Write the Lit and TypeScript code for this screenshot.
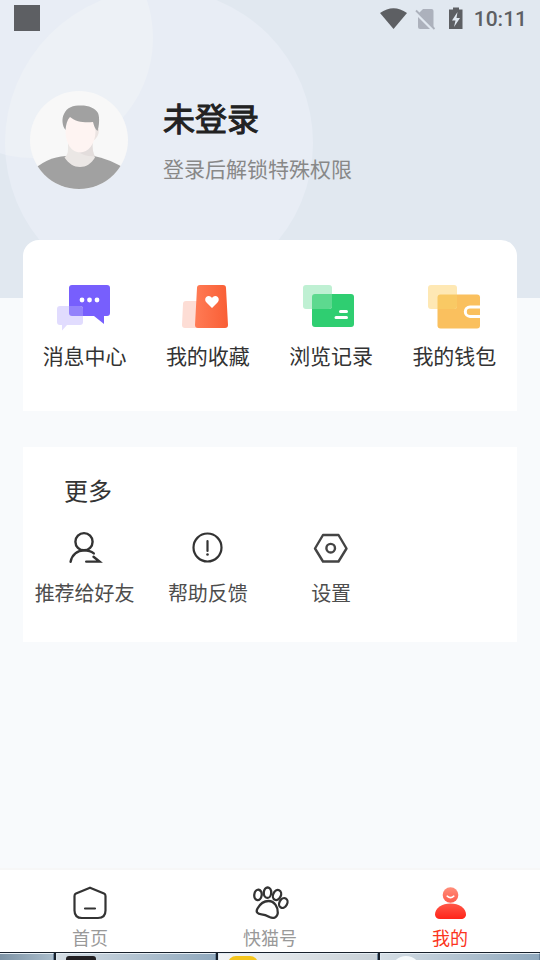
import { LitElement, html, css, svg } from "lit";
import { customElement } from "lit/decorators.js";
import { classMap } from "lit/directives/class-map.js";

const messageIcon = svg`
  <g transform="translate(-1 0)">
    <path d="M30 15H65a3 3 0 0 1 3 3v25a3 3 0 0 1-3 3H62V54L52 46H30a3 3 0 0 1-3-3V18a3 3 0 0 1 3-3Z" fill="#775ffd"/>
    <path d="M18 36H38a3 3 0 0 1 3 3v13a3 3 0 0 1-3 3H25L20 60.500V55H18a3 3 0 0 1-3-3V39a3 3 0 0 1 3-3Z" fill="#e1dcfe"/>
    <path d="M27 36H38a3 3 0 0 1 3 3v7H30a3 3 0 0 1-3-3Z" fill="#9382fb"/>
    <g fill="#fff"><circle cx="40" cy="30" r="2.400"/><circle cx="47.500" cy="30" r="2.400"/><circle cx="55" cy="30" r="2.400"/></g>
  </g>`;

const favouriteIcon = svg`
  <defs><linearGradient id="fav"><stop stop-color="#ff7b55"/><stop offset="1" stop-color="#f95e35"/></linearGradient></defs>
  <path d="M20 31H36V58H19a3 3 0 0 1-3-3L17 34a3 3 0 0 1 3-3Z" fill="#fdddd5"/>
  <path d="M34 15H57a3 3 0 0 1 3 3L62 55a3 3 0 0 1-3 3H32a3 3 0 0 1-3-3L31 18a3 3 0 0 1 3-3Z" fill="url(#fav)"/>
  <path d="M46 38 40.500 32.500C38 30 39.500 26 42.500 26c2 0 3 1 3.500 2.200.5-1.200 1.500-2.200 3.500-2.200 3 0 4.500 4 2 6.500Z" fill="#fff"/>`;

const historyIcon = svg`
  <g transform="translate(-1 0)">
    <rect x="24" y="24" width="42" height="33" rx="3" fill="#2fce71"/>
    <rect x="15" y="15" width="29" height="24" rx="3" fill="#bff0d3"/>
    <path d="M24 27a3 3 0 0 1 3-3H44V36a3 3 0 0 1-3 3H24Z" fill="#5dd98f"/>
    <path d="M52.500 41.400H58.500M48 47.400H58.500" stroke="#fff" stroke-width="3" stroke-linecap="round"/>
  </g>`;

const walletIcon = svg`
  <g transform="translate(1 0)">
    <rect x="24.500" y="24.500" width="42.500" height="34" rx="3" fill="#fac05e"/>
    <rect x="15" y="15" width="29" height="24" rx="3" fill="#fee8b4"/>
    <path d="M24.500 27.500a3 3 0 0 1 3-3H44V36a3 3 0 0 1-3 3H24.500Z" fill="#f9c964"/>
    <path d="M67 37H57a4.700 4.700 0 0 0 0 9.400H67" fill="none" stroke="#fff" stroke-width="3"/>
  </g>`;

const shareIcon = svg`
  <g fill="none" stroke="#333" stroke-width="2.400" stroke-linecap="round">
    <circle cx="19" cy="14.700" r="8.600"/>
    <path d="M5.600 34.700C7 27.500 12.500 23.400 19 23.400c4 0 7.300 1 9.800 3M28.500 29.800 34.500 34.600H21.200"/>
  </g>`;

const helpIcon = svg`
  <g fill="none" stroke="#333" stroke-width="2.200" stroke-linecap="round">
    <circle cx="19.500" cy="20.500" r="14"/>
    <path d="M19.500 14v10"/>
  </g><circle cx="19.500" cy="27.500" r="1.300" fill="#333"/>`;

const settingsIcon = svg`
  <g fill="none" stroke="#444" stroke-width="2.400" stroke-linejoin="round">
    <path d="M12 8H27.500L35.500 21.500 27.500 34.500H12L4 21.500Z"/>
    <circle cx="19.700" cy="21.200" r="4.300"/>
  </g>`;

const homeIcon = svg`
  <path d="M20 4.700 34 10.500Q35.500 11.200 35.500 13V27.500Q35.500 35 28 35H12Q4.500 35 4.500 27.500V13Q4.500 11.200 6 10.500ZM15 25.500H25"
    fill="none" stroke="#333" stroke-width="2.200" stroke-linecap="round" stroke-linejoin="round"/>`;

const pawIcon = svg`
  <g fill="none" stroke="#333" stroke-width="2.300" stroke-linejoin="round">
    <ellipse cx="8" cy="11.900" rx="3.700" ry="5.200" transform="rotate(8 8 11.900)"/>
    <ellipse cx="17.500" cy="9.700" rx="3.700" ry="5.200" transform="rotate(4 17.500 9.700)"/>
    <ellipse cx="27" cy="12" rx="3.900" ry="5.200" transform="rotate(24 27 12)"/>
    <ellipse cx="33.300" cy="20" rx="3.900" ry="5.200" transform="rotate(28 33.300 20)"/>
    <path d="M7.500 25.500C10 21 14 18 18.500 18C24.500 18 28.300 24.500 27.800 30C27.300 34.500 23.500 36 19.500 34C16.500 32.300 15 31.500 11.500 31.300C7.500 31 5.500 29 7.500 25.500Z"/>
  </g>`;

const mineIcon = svg`
  <defs>
    <linearGradient id="mine" x1="0" y1="4" x2="0" y2="36" gradientUnits="userSpaceOnUse">
      <stop stop-color="#ff8f7b"/><stop offset="1" stop-color="#ff2419"/>
    </linearGradient>
  </defs>
  <g fill="url(#mine)">
    <circle cx="20.500" cy="12" r="7.800"/>
    <path d="M5 31.500C5 25 12 20.500 20.500 20.500S36 25 36 31.500C36 34 34 36 31 36H10C7 36 5 34 5 31.500Z"/>
  </g>
  <path d="M17.200 13.200Q20.500 16 23.800 13.200" fill="none" stroke="#fff" stroke-width="1.600" stroke-linecap="round"/>`;

const shortcuts = [
  { label: "消息中心", icon: messageIcon },
  { label: "我的收藏", icon: favouriteIcon },
  { label: "浏览记录", icon: historyIcon },
  { label: "我的钱包", icon: walletIcon },
];

const tools = [
  { label: "推荐给好友", icon: shareIcon },
  { label: "帮助反馈", icon: helpIcon },
  { label: "设置", icon: settingsIcon },
];

const tabs = [
  { label: "首页", icon: homeIcon, active: false },
  { label: "快猫号", icon: pawIcon, active: false },
  { label: "我的", icon: mineIcon, active: true },
];

@customElement("status-bar")
class StatusBar extends LitElement {
  static styles = css`
    :host { display: flex; align-items: center; justify-content: space-between; height: 36px; padding: 0 13px 0 14px; color: #5d5f63; }
    .square { width: 26px; height: 26px; background: currentColor; }
    .right { display: flex; align-items: center; margin-top: 2px; }
    .time { margin-left: 7px; font: 500 21px/24px Roboto, sans-serif; }
  `;
  render() {
    return html`
      <div class="square"></div>
      <div class="right">
        <svg width="87" height="28" viewBox="0 0 87 28" aria-hidden="true">
          <path d="M0 8Q13.500-1.500 27 8L13.500 24Z" fill="#5d5f63"/>
          <path d="M43 4H51.500a2 2 0 0 1 2 2V22a2 2 0 0 1-2 2H40a2 2 0 0 1-2-2V9Z" fill="#acb1bc"/>
          <path d="M35 6.500 54 25.500" stroke="#e1e8f0" stroke-width="3.500"/>
          <path d="M36 5.500 54.500 24" stroke="#acb1bc" stroke-width="1.800"/>
          <path d="M73 2.500h6V4.500h3.500V24H69V4.500H73Z" fill="#5d5f63"/>
          <path d="M77.500 7 72 15.500h3.500L74 22l6-9h-3.500Z" fill="#e1e8f0"/>
        </svg>
        <span class="time">10:11</span>
      </div>`;
  }
}

@customElement("profile-header")
class ProfileHeader extends LitElement {
  static styles = css`
    :host { display: block; position: relative; overflow: hidden; height: 298px; background: #e1e8f0; }
    .disc { position: absolute; border-radius: 50%; }
    .large { width: 308px; height: 308px; left: 5px; top: -11px; background: #e8edf5; }
    .small { width: 240px; height: 240px; left: -87px; top: -82px; background: #e8edf5; }
    .cross { width: 240px; height: 240px; left: -92px; top: -71px; background: #edf1f6; }
    .clip { overflow: hidden; }
    .content { position: relative; }
    .user { display: flex; align-items: center; gap: 35px; padding: 55px 30px 0; }
    .avatar { flex: none; width: 98px; height: 98px; }
    .name { margin: 0; font-size: 32px; line-height: 44px; font-weight: 400; -webkit-text-stroke: 1px #222; color: #222; }
    .hint { margin: 14px 0 2px; font-size: 21px; line-height: 30px; color: #888; }
  `;
  render() {
    return html`
      <div class="disc small"></div>
      <div class="disc large clip"><div class="disc cross"></div></div>
      <div class="content">
        <status-bar></status-bar>
        <div class="user">
          <svg class="avatar" viewBox="0 0 98 98" role="img" aria-label="头像">
            <defs><clipPath id="round"><circle cx="49" cy="49" r="49"/></clipPath></defs>
            <circle cx="49" cy="49" r="49" fill="#f8f8f8"/>
            <g clip-path="url(#round)">
              <path d="M0 82Q16 66 36 65H64Q77 67 98 79V98H0Z" fill="#a1a1a1"/>
              <path d="M38 50V58Q38 64 34.500 66.500C39 73 44 76 50 76S61 73 65 66.500Q62 62 62.500 50Z" fill="#ebe7e5"/>
              <path d="M62.500 50Q62 61 65 65Q56 66 49 61.500Z" fill="#e3dddc"/>
              <path d="M61 36 69 38Q69 46 63 50Z" fill="#ebe4e2"/>
              <path d="M35.500 40 38 24H62L65.500 40C65.500 53 58 61.500 50 61.500S35.500 53 35.500 40Z" fill="#fef4f2"/>
              <path d="M35.500 39C32 35 31.500 27 34 23C37 16 43 14.500 51 14.500C59 14.500 65 17 68 22C70 27 69 36 67.500 40C65 38 64 35 63 31C55 32 46 31 40 26C37 29 36 34 35.500 39Z" fill="#a1a1a1"/>
            </g>
          </svg>
          <div>
            <h1 class="name">未登录</h1>
            <p class="hint">登录后解锁特殊权限</p>
          </div>
        </div>
      </div>`;
  }
}

@customElement("tab-bar")
class TabBar extends LitElement {
  static styles = css`
    :host { display: block; background: #fff; border-top: 2px solid #f7f7f7; }
    nav { display: grid; grid-template-columns: repeat(3, 1fr); height: 82px; }
    .tab { display: flex; flex-direction: column; align-items: center; gap: 1px; padding-top: 13px; color: #999; font-size: 18px; line-height: 26px; text-decoration: none; }
    .tab svg { width: 40px; height: 40px; }
    .active { color: #fb3420; }
  `;
  render() {
    return html`<nav>
      ${tabs.map((t) => html`
        <a href="#" class=${classMap({ tab: true, active: t.active })}>
          <svg viewBox="0 0 40 40" aria-hidden="true">${t.icon}</svg>
          <span>${t.label}</span>
        </a>`)}
    </nav>`;
  }
}

@customElement("task-strip")
class TaskStrip extends LitElement {
  static styles = css`
    :host { display: grid; grid-template-columns: 54px 1fr 1fr 1fr; gap: 2px; height: 8px; padding-top: 1px; box-sizing: border-box; overflow: hidden; background: #17202b; }
    .task { overflow: hidden; border-top: 1px solid #e5edf3; border-left: 1px solid #dbe5ed; border-right: 1px solid #68819a; background: linear-gradient(90deg, #d5dee5, #8fa8bd); }
    .first { border-left: 0; background: linear-gradient(90deg, #7d93a5, #a9bccb); }
    .light { background: linear-gradient(90deg, #f2f4f5, #c7d0d7); }
    .icon { width: 30px; height: 30px; margin: 2px 0 0 9px; border-radius: 3px; background: #222023; }
    .yellow { border-radius: 8px; background: #f4c51d; }
    .white { margin-left: 10px; border-radius: 50%; background: #f5f9fb; }
  `;
  render() {
    return html`
      <div class="task first"></div>
      <div class="task"><div class="icon"></div></div>
      <div class="task light"><div class="icon yellow"></div></div>
      <div class="task"><div class="icon white"></div></div>`;
  }
}

@customElement("app-root")
class AppRoot extends LitElement {
  static styles = css`
    :host { display: flex; flex-direction: column; min-height: 100vh; background: #f8fafc; font-family: "Noto Sans CJK SC", sans-serif; color: #333; }
    main { flex: 1; padding: 0 23px 24px; margin-top: -58px; position: relative; }
    .card { background: #fff; }
    .shortcuts { display: grid; grid-template-columns: repeat(4, 1fr); padding: 30px 1px 39px 0; border-radius: 16px 16px 0 0; }
    .more { margin-top: 36px; padding: 25px 1px 34px 0; }
    .title { margin: 0 0 0 41px; font-size: 24px; line-height: 36px; font-weight: 400; }
    .tools { display: grid; grid-template-columns: repeat(4, 1fr); margin-top: 19px; }
    .item { display: flex; flex-direction: column; align-items: center; padding: 0; border: 0; background: none; font: inherit; color: inherit; white-space: nowrap; cursor: pointer; }
    .shortcut { font-size: 21px; line-height: 30px; }
    .shortcut svg { width: 80px; height: 72px; margin: 0 0 -2px -4px; }
    .shortcut span { padding-bottom: 2px; }
    .tool { font-size: 20px; line-height: 30px; gap: 11px; color: #4d4d4d; }
    .tool svg { width: 40px; height: 40px; }
  `;
  render() {
    return html`
      <profile-header></profile-header>
      <main>
        <section class="card shortcuts">
          ${shortcuts.map((s) => html`
            <button class="item shortcut">
              <svg viewBox="0 0 80 72" aria-hidden="true">${s.icon}</svg>
              <span>${s.label}</span>
            </button>`)}
        </section>
        <section class="card more">
          <h2 class="title">更多</h2>
          <div class="tools">
            ${tools.map((s) => html`
              <button class="item tool">
                <svg viewBox="0 0 40 40" aria-hidden="true">${s.icon}</svg>
                <span>${s.label}</span>
              </button>`)}
          </div>
        </section>
      </main>
      <tab-bar></tab-bar>
      <task-strip></task-strip>`;
  }
}
